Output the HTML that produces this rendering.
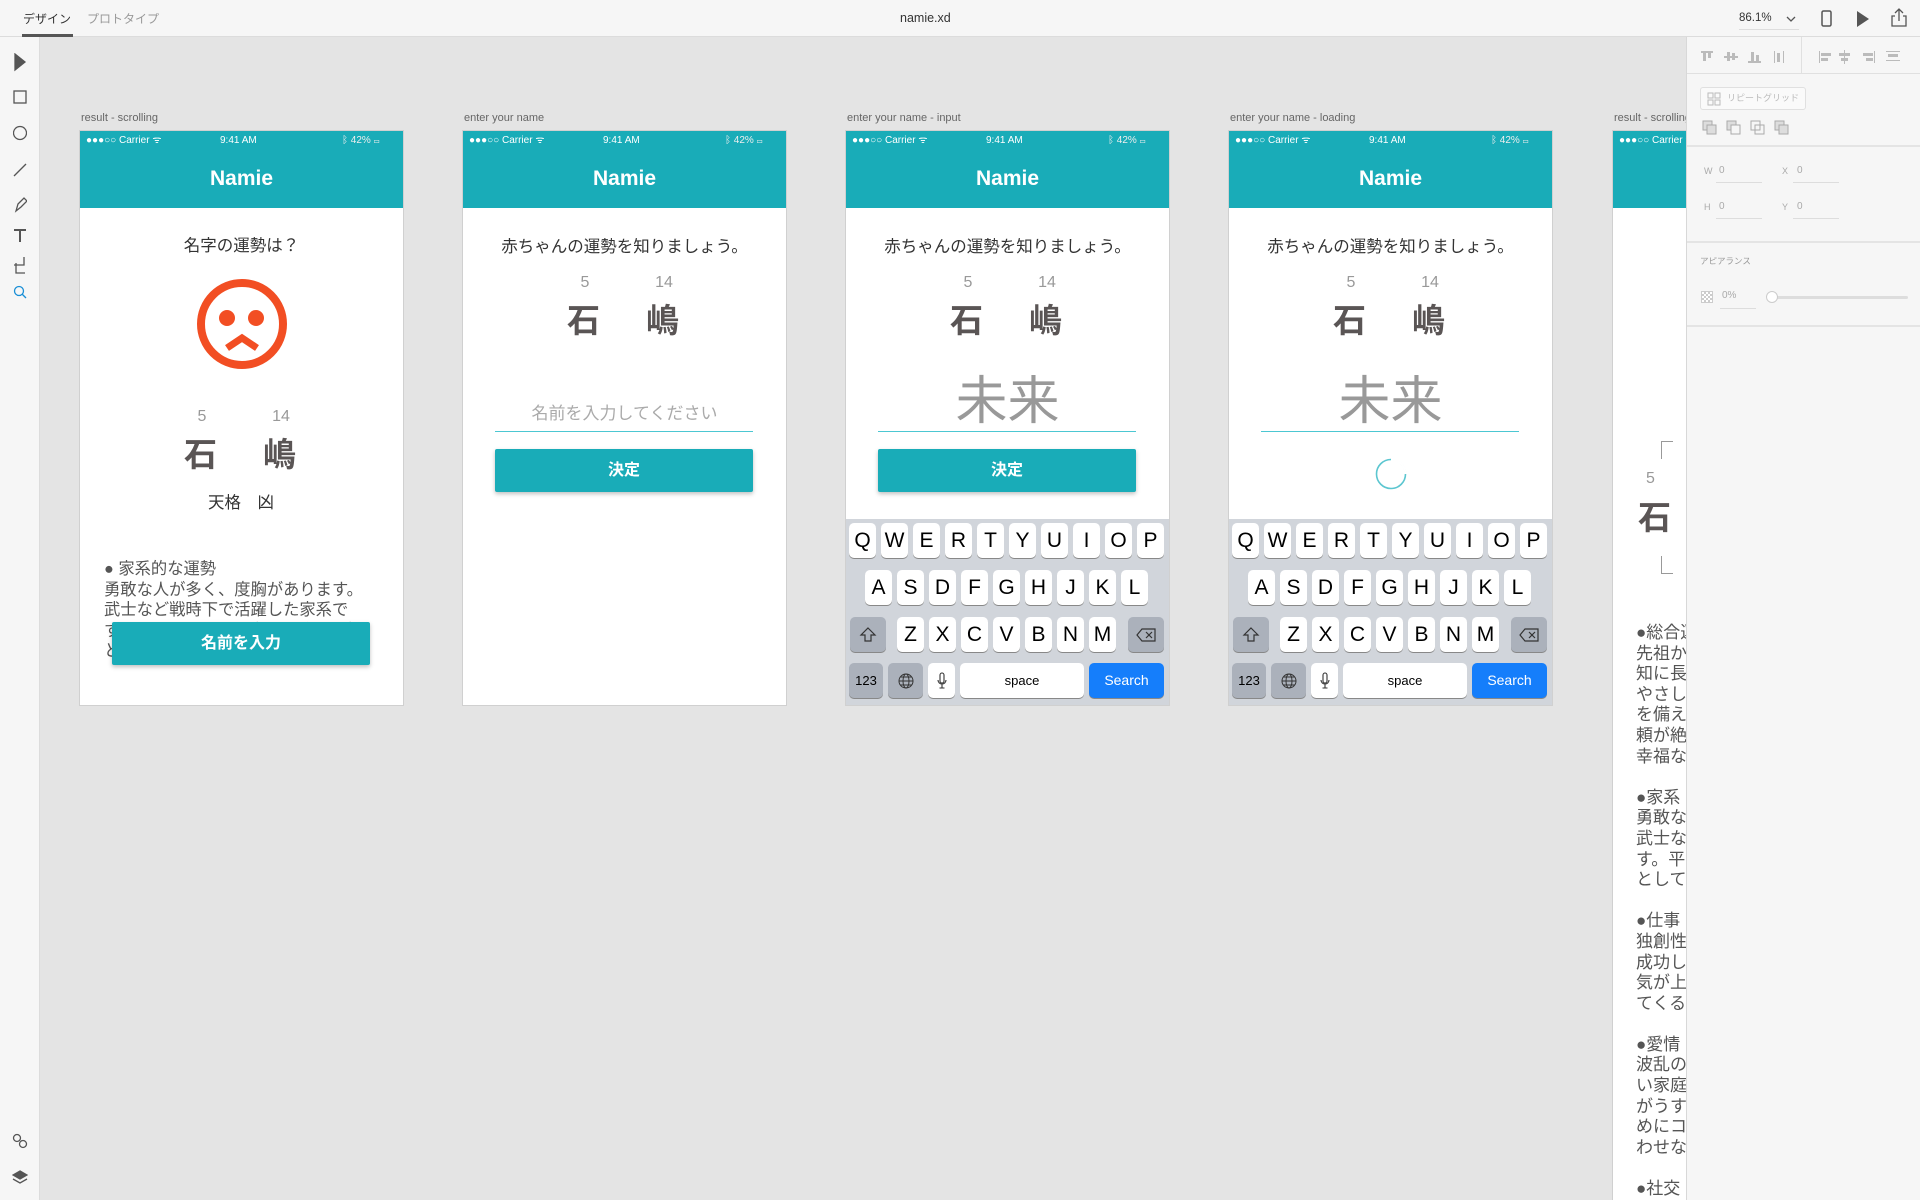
<!DOCTYPE html>
<html style="overflow:hidden;height:1200px"><head><meta charset="utf-8">
<style>
*{box-sizing:border-box;margin:0;padding:0}
body{width:1920px;height:1200px;overflow:hidden;background:#e4e4e4;font-family:"Liberation Sans","Noto Sans CJK JP",sans-serif;position:relative}
.abs{position:absolute}
#top{left:0;top:0;width:1920px;height:37px;background:#f6f6f6;border-bottom:1px solid #dcdcdc}
#left{left:0;top:37px;width:40px;height:1163px;background:#f6f6f6;border-right:1px solid #dcdcdc}
#right{left:1686px;top:37px;width:234px;height:1163px;background:#f6f6f6;border-left:1px solid #d8d8d8}
.lbl{font-size:11px;color:#666;top:112px}
.ph{top:131px;width:323px;height:574px;background:#fff;box-shadow:0 0 0 1px #d0d0d0;overflow:hidden}
.hd{left:0;top:0;width:323px;height:77px;background:#19acb8}
.sb{top:4px;font-size:10px;color:#fff;line-height:12px}
.nm{left:0;width:323px;top:34px;text-align:center;color:#fff;font-weight:bold;font-size:21px;line-height:28px}
.c{left:0;width:323px;text-align:center}
.num{font-size:16px;color:#999;line-height:18px}
.kj{font-size:33px;color:#5a5555;font-weight:bold;line-height:38px}
.btn{left:32px;width:258px;height:43px;background:#19acb8;color:#fff;font-weight:bold;font-size:16px;text-align:center;line-height:43px;box-shadow:0 2px 4px rgba(0,0,0,.25);border-radius:2px}
.kb{left:0;top:388px;width:323px;height:186px;background:#d1d5db}
.k{position:absolute;width:27px;height:35px;background:#fff;border-radius:5px;box-shadow:0 1px 0 #888;font-size:21px;color:#000;text-align:center;line-height:35px}
.f{background:#abb1bb}
.k svg{position:absolute;left:50%;top:50%;transform:translate(-50%,-50%)}
</style></head><body>
<div id="top" class="abs">
 <div class="abs" style="left:23px;top:10px;font-size:12px;color:#333">デザイン</div>
 <div class="abs" style="left:22px;top:34px;width:51px;height:3px;background:#555"></div>
 <div class="abs" style="left:87px;top:10px;font-size:12px;color:#999">プロトタイプ</div>
 <div class="abs" style="left:900px;top:11px;font-size:12.5px;color:#333">namie.xd</div>
 <div class="abs" style="left:1739px;top:12px;font-size:11.5px;color:#333">86.1%</div>
 <div class="abs" style="left:1739px;top:29px;width:60px;height:1px;background:#ddd"></div>
 <svg class="abs" style="left:1786px;top:15px" width="10" height="8"><path d="M1 2l4 4 4-4" stroke="#555" fill="none" stroke-width="1.3"/></svg>
 <svg class="abs" style="left:1820px;top:10px" width="14" height="18"><rect x="2" y="1" width="9" height="15" rx="1.5" stroke="#555" fill="none" stroke-width="1.5"/></svg>
 <svg class="abs" style="left:1855px;top:10px" width="16" height="18"><path d="M2 1l12 8-12 8z" fill="#555"/></svg>
 <svg class="abs" style="left:1890px;top:8px" width="18" height="20"><path d="M9 1v12M5 5l4-4 4 4M5 8H2v10h14V8h-3" stroke="#555" fill="none" stroke-width="1.3"/></svg>
</div>
<div id="left" class="abs">
 <svg class="abs" style="left:13px;top:16px" width="14" height="260" fill="none" stroke="#555" stroke-width="1.3">
  <path d="M2 1l10 8-10 8z" fill="#555"/>
  <rect x="1" y="38" width="12" height="12"/>
  <circle cx="7" cy="80" r="6.5"/>
  <path d="M1 123l12-12"/>
  <path d="M3 158l2-7 6-6 3 3-6 6z"/>
  <path d="M1 177h12M7 177v12" stroke-width="2"/>
  <path d="M3 210v10h9M1 212h10v-8"/>
  <circle cx="6" cy="238" r="4.5" stroke="#1a8fd6"/><path d="M9 241l4 4" stroke="#1a8fd6"/>
 </svg>
 <svg class="abs" style="left:12px;top:1096px" width="16" height="52" fill="none" stroke="#555" stroke-width="1.3">
  <circle cx="5" cy="5" r="3.5"/><circle cx="11" cy="11" r="3.5"/>
  <path d="M8 38l7 4-7 4-7-4z" fill="#555"/><path d="M1 46l7 4 7-4"/>
 </svg>
</div>

<div class="abs lbl" style="left:81px">result - scrolling</div>
<div class="abs lbl" style="left:464px">enter your name</div>
<div class="abs lbl" style="left:847px">enter your name - input</div>
<div class="abs lbl" style="left:1230px">enter your name - loading</div>
<div class="abs lbl" style="left:1614px">result - scrolling</div>

<!-- phone 1 -->
<div class="abs ph" style="left:80px">
 <div class="abs hd"></div>
 <div class="abs sb" style="left:6px">●●●○○ Carrier ᯤ</div>
 <div class="abs sb" style="left:140px">9:41 AM</div>
 <div class="abs sb" style="left:262px;color:#eee">ᛒ 42% ▭</div>
 <div class="abs nm">Namie</div>
 <div class="abs c" style="top:104px;font-size:16.5px;color:#333;line-height:22px">名字の運勢は？</div>
 <svg class="abs" style="left:112px;top:147px" width="100" height="100"><circle cx="50" cy="46" r="41" stroke="#f24e23" stroke-width="8" fill="none"/><circle cx="35" cy="40" r="8" fill="#f24e23"/><circle cx="64" cy="40" r="8" fill="#f24e23"/><path d="M35 70l15-10 15 10" stroke="#f24e23" stroke-width="7" fill="none"/></svg>
 <div class="abs num" style="left:112px;top:277px;width:20px;text-align:center">5</div>
 <div class="abs num" style="left:186px;top:277px;width:30px;text-align:center">14</div>
 <div class="abs kj" style="left:104px;top:305px">石</div>
 <div class="abs kj" style="left:183px;top:305px">嶋</div>
 <div class="abs" style="left:128px;top:361px;font-size:16.5px;color:#333;line-height:22px">天格　凶</div>
 <div class="abs" style="left:24px;top:428px;font-size:16.3px;color:#555;line-height:20.5px;width:300px;white-space:nowrap">● 家系的な運勢<br>勇敢な人が多く、度胸があります。<br>武士など戦時下で活躍した家系で<br>す。平和な時代には才能を発揮し指<br>として活躍するでしょう。</div>
 <div class="abs btn" style="top:491px">名前を入力</div>
</div>

<!-- phone 2 -->
<div class="abs ph" style="left:463px">
 <div class="abs hd"></div>
 <div class="abs sb" style="left:6px">●●●○○ Carrier ᯤ</div>
 <div class="abs sb" style="left:140px">9:41 AM</div>
 <div class="abs sb" style="left:262px;color:#eee">ᛒ 42% ▭</div>
 <div class="abs nm">Namie</div>
 <div class="abs c" style="top:105px;font-size:16.5px;color:#333;line-height:22px">赤ちゃんの運勢を知りましょう。</div>
 <div class="abs num" style="left:112px;top:143px;width:20px;text-align:center">5</div>
 <div class="abs num" style="left:186px;top:143px;width:30px;text-align:center">14</div>
 <div class="abs kj" style="left:104px;top:171px">石</div>
 <div class="abs kj" style="left:183px;top:171px">嶋</div>
 <div class="abs c" style="top:272px;font-size:17px;color:#aaa;line-height:22px">名前を入力してください</div>
 <div class="abs" style="left:32px;top:300px;width:258px;height:1px;background:#4cc7d2"></div>
 <div class="abs btn" style="top:318px">決定</div>
</div>

<!-- phone 3 -->
<div class="abs ph" style="left:846px">
 <div class="abs hd"></div>
 <div class="abs sb" style="left:6px">●●●○○ Carrier ᯤ</div>
 <div class="abs sb" style="left:140px">9:41 AM</div>
 <div class="abs sb" style="left:262px;color:#eee">ᛒ 42% ▭</div>
 <div class="abs nm">Namie</div>
 <div class="abs c" style="top:105px;font-size:16.5px;color:#333;line-height:22px">赤ちゃんの運勢を知りましょう。</div>
 <div class="abs num" style="left:112px;top:143px;width:20px;text-align:center">5</div>
 <div class="abs num" style="left:186px;top:143px;width:30px;text-align:center">14</div>
 <div class="abs kj" style="left:104px;top:171px">石</div>
 <div class="abs kj" style="left:183px;top:171px">嶋</div>
 <div class="abs c" style="top:240px;font-size:52px;color:#999;line-height:62px">未来</div>
 <div class="abs" style="left:32px;top:300px;width:258px;height:1px;background:#4cc7d2"></div>
 <div class="abs btn" style="top:318px">決定</div>
 <div class="abs kb">
  <div class="k" style="left:3px;top:4px">Q</div><div class="k" style="left:35px;top:4px">W</div><div class="k" style="left:67px;top:4px">E</div><div class="k" style="left:99px;top:4px">R</div><div class="k" style="left:131px;top:4px">T</div><div class="k" style="left:163px;top:4px">Y</div><div class="k" style="left:195px;top:4px">U</div><div class="k" style="left:227px;top:4px">I</div><div class="k" style="left:259px;top:4px">O</div><div class="k" style="left:291px;top:4px">P</div>
  <div class="k" style="left:19px;top:51px">A</div><div class="k" style="left:51px;top:51px">S</div><div class="k" style="left:83px;top:51px">D</div><div class="k" style="left:115px;top:51px">F</div><div class="k" style="left:147px;top:51px">G</div><div class="k" style="left:179px;top:51px">H</div><div class="k" style="left:211px;top:51px">J</div><div class="k" style="left:243px;top:51px">K</div><div class="k" style="left:275px;top:51px">L</div>
  <div class="k f" style="left:4px;top:98px;width:36px"><svg width="18" height="16"><path d="M9 1l7 7h-4v6H6V8H2z" fill="none" stroke="#333" stroke-width="1.2"/></svg></div>
  <div class="k" style="left:51px;top:98px">Z</div><div class="k" style="left:83px;top:98px">X</div><div class="k" style="left:115px;top:98px">C</div><div class="k" style="left:147px;top:98px">V</div><div class="k" style="left:179px;top:98px">B</div><div class="k" style="left:211px;top:98px">N</div><div class="k" style="left:243px;top:98px">M</div>
  <div class="k f" style="left:282px;top:98px;width:36px"><svg width="20" height="14"><path d="M6 1h13v12H6L1 7z" fill="none" stroke="#333" stroke-width="1.2"/><path d="M10 4l6 6M16 4l-6 6" stroke="#333" stroke-width="1.2"/></svg></div>
  <div class="k f" style="left:3px;top:144px;width:34px;font-size:13px">123</div>
  <div class="k f" style="left:42px;top:144px;width:35px"><svg width="16" height="16" fill="none" stroke="#333" stroke-width="1"><circle cx="8" cy="8" r="7"/><ellipse cx="8" cy="8" rx="3" ry="7"/><path d="M1 8h14M2.5 4h11M2.5 12h11"/></svg></div>
  <div class="k" style="left:82px;top:144px"><svg width="10" height="18" fill="none" stroke="#333" stroke-width="1.1"><rect x="3" y="1" width="4" height="10" rx="2"/><path d="M1 8a4 4 0 0 0 8 0M5 12v4M2.5 16h5"/></svg></div>
  <div class="k" style="left:114px;top:144px;width:124px;font-size:13px">space</div>
  <div class="k" style="left:243px;top:144px;width:75px;font-size:14px;background:#157efb;color:#fff">Search</div>
 </div>
</div>

<!-- phone 4 -->
<div class="abs ph" style="left:1229px">
 <div class="abs hd"></div>
 <div class="abs sb" style="left:6px">●●●○○ Carrier ᯤ</div>
 <div class="abs sb" style="left:140px">9:41 AM</div>
 <div class="abs sb" style="left:262px;color:#eee">ᛒ 42% ▭</div>
 <div class="abs nm">Namie</div>
 <div class="abs c" style="top:105px;font-size:16.5px;color:#333;line-height:22px">赤ちゃんの運勢を知りましょう。</div>
 <div class="abs num" style="left:112px;top:143px;width:20px;text-align:center">5</div>
 <div class="abs num" style="left:186px;top:143px;width:30px;text-align:center">14</div>
 <div class="abs kj" style="left:104px;top:171px">石</div>
 <div class="abs kj" style="left:183px;top:171px">嶋</div>
 <div class="abs c" style="top:240px;font-size:52px;color:#999;line-height:62px">未来</div>
 <div class="abs" style="left:32px;top:300px;width:258px;height:1px;background:#4cc7d2"></div>
 <svg class="abs" style="left:145px;top:326px" width="34" height="34"><circle cx="17" cy="17" r="14.5" stroke="#5cc6d0" stroke-width="1.6" fill="none"/><path d="M17 2.5a14.5 14.5 0 0 1 14.5 14.5" stroke="#fff" stroke-width="2.2" fill="none"/></svg>
 <div class="abs kb">
  <div class="k" style="left:3px;top:4px">Q</div><div class="k" style="left:35px;top:4px">W</div><div class="k" style="left:67px;top:4px">E</div><div class="k" style="left:99px;top:4px">R</div><div class="k" style="left:131px;top:4px">T</div><div class="k" style="left:163px;top:4px">Y</div><div class="k" style="left:195px;top:4px">U</div><div class="k" style="left:227px;top:4px">I</div><div class="k" style="left:259px;top:4px">O</div><div class="k" style="left:291px;top:4px">P</div>
  <div class="k" style="left:19px;top:51px">A</div><div class="k" style="left:51px;top:51px">S</div><div class="k" style="left:83px;top:51px">D</div><div class="k" style="left:115px;top:51px">F</div><div class="k" style="left:147px;top:51px">G</div><div class="k" style="left:179px;top:51px">H</div><div class="k" style="left:211px;top:51px">J</div><div class="k" style="left:243px;top:51px">K</div><div class="k" style="left:275px;top:51px">L</div>
  <div class="k f" style="left:4px;top:98px;width:36px"><svg width="18" height="16"><path d="M9 1l7 7h-4v6H6V8H2z" fill="none" stroke="#333" stroke-width="1.2"/></svg></div>
  <div class="k" style="left:51px;top:98px">Z</div><div class="k" style="left:83px;top:98px">X</div><div class="k" style="left:115px;top:98px">C</div><div class="k" style="left:147px;top:98px">V</div><div class="k" style="left:179px;top:98px">B</div><div class="k" style="left:211px;top:98px">N</div><div class="k" style="left:243px;top:98px">M</div>
  <div class="k f" style="left:282px;top:98px;width:36px"><svg width="20" height="14"><path d="M6 1h13v12H6L1 7z" fill="none" stroke="#333" stroke-width="1.2"/><path d="M10 4l6 6M16 4l-6 6" stroke="#333" stroke-width="1.2"/></svg></div>
  <div class="k f" style="left:3px;top:144px;width:34px;font-size:13px">123</div>
  <div class="k f" style="left:42px;top:144px;width:35px"><svg width="16" height="16" fill="none" stroke="#333" stroke-width="1"><circle cx="8" cy="8" r="7"/><ellipse cx="8" cy="8" rx="3" ry="7"/><path d="M1 8h14M2.5 4h11M2.5 12h11"/></svg></div>
  <div class="k" style="left:82px;top:144px"><svg width="10" height="18" fill="none" stroke="#333" stroke-width="1.1"><rect x="3" y="1" width="4" height="10" rx="2"/><path d="M1 8a4 4 0 0 0 8 0M5 12v4M2.5 16h5"/></svg></div>
  <div class="k" style="left:114px;top:144px;width:124px;font-size:13px">space</div>
  <div class="k" style="left:243px;top:144px;width:75px;font-size:14px;background:#157efb;color:#fff">Search</div>
 </div>
</div>

<!-- phone 5 -->
<div class="abs ph" style="left:1613px;height:1069px">
 <div class="abs hd"></div>
 <div class="abs sb" style="left:6px">●●●○○ Carrier ᯤ</div>
 <div class="abs" style="left:48px;top:310px;width:12px;height:18px;border-left:1px solid #999;border-top:1px solid #999"></div>
 <div class="abs" style="left:48px;top:425px;width:12px;height:18px;border-left:1px solid #999;border-bottom:1px solid #999"></div>
 <div class="abs num" style="left:33px;top:339px">5</div>
 <div class="abs kj" style="left:25px;top:368px">石</div>
 <div class="abs" style="left:23px;top:492px;font-size:17px;color:#555;line-height:20.6px;white-space:nowrap">●総合運<br>先祖か<br>知に長<br>やさし<br>を備え<br>頼が絶<br>幸福な<br><br>●家系<br>勇敢な<br>武士な<br>す。平<br>として<br><br>●仕事<br>独創性<br>成功し<br>気が上<br>てくる<br><br>●愛情<br>波乱の<br>い家庭<br>がうす<br>めにコ<br>わせな<br><br>●社交</div>
</div>

<div id="right" class="abs">
 <svg class="abs" style="left:10px;top:12px" width="220" height="16" fill="#bbb">
  <rect x="4" y="2" width="12" height="2"/><rect x="6" y="4" width="3" height="8"/><rect x="11" y="4" width="3" height="5"/>
  <rect x="27" y="7" width="14" height="2"/><rect x="30" y="3" width="3" height="9"/><rect x="35" y="4" width="3" height="7"/>
  <rect x="51" y="12" width="13" height="2"/><rect x="54" y="3" width="3" height="9"/><rect x="59" y="6" width="3" height="6"/>
  <rect x="77" y="2" width="1" height="12"/><rect x="80" y="4" width="3" height="9"/><rect x="86" y="2" width="1" height="12"/>
  <rect x="122" y="2" width="1" height="12"/><rect x="124" y="4" width="10" height="3"/><rect x="124" y="9" width="7" height="3"/>
  <rect x="147" y="1" width="1" height="14"/><rect x="142" y="4" width="11" height="3"/><rect x="144" y="9" width="7" height="3"/>
  <rect x="177" y="2" width="1" height="12"/><rect x="166" y="4" width="10" height="3"/><rect x="169" y="9" width="7" height="3"/>
  <rect x="189" y="2" width="14" height="1"/><rect x="191" y="5" width="10" height="3"/><rect x="189" y="11" width="14" height="1"/>
 </svg>
 <div class="abs" style="left:114px;top:0;width:1px;height:36px;background:#e0e0e0"></div>
 <div class="abs" style="left:0;top:36px;width:234px;height:1px;background:#e0e0e0"></div>
 <div class="abs" style="left:13px;top:50px;width:106px;height:23px;border:1px solid #e0e0e0;border-radius:3px;background:#fafafa;font-size:9px;color:#bbb;line-height:21px;padding-left:26px">リピートグリッド</div>
 <svg class="abs" style="left:20px;top:55px" width="14" height="14" fill="none" stroke="#bbb"><rect x="1" y="1" width="5" height="5"/><rect x="8" y="1" width="5" height="5"/><rect x="1" y="8" width="5" height="5"/><rect x="8" y="8" width="5" height="5"/></svg>
 <svg class="abs" style="left:15px;top:83px" width="95" height="16" fill="#ddd" stroke="#aaa">
  <rect x="1" y="1" width="9" height="9"/><rect x="5" y="5" width="9" height="9"/>
  <rect x="25" y="1" width="9" height="9"/><rect x="29" y="5" width="9" height="9" fill="#f6f6f6"/>
  <rect x="49" y="1" width="9" height="9" fill="none"/><rect x="53" y="5" width="9" height="9" fill="none"/>
  <rect x="73" y="1" width="9" height="9"/><rect x="77" y="5" width="9" height="9"/>
 </svg>
 <div class="abs" style="left:0;top:108px;width:234px;height:2px;background:#e4e4e4"></div>
 <div class="abs" style="left:17px;top:129px;font-size:9px;color:#aaa">W</div>
 <div class="abs" style="left:32px;top:128px;font-size:10px;color:#aaa">0</div>
 <div class="abs" style="left:29px;top:145px;width:46px;height:1px;background:#ddd"></div>
 <div class="abs" style="left:95px;top:129px;font-size:9px;color:#aaa">X</div>
 <div class="abs" style="left:110px;top:128px;font-size:10px;color:#aaa">0</div>
 <div class="abs" style="left:106px;top:145px;width:46px;height:1px;background:#ddd"></div>
 <div class="abs" style="left:17px;top:165px;font-size:9px;color:#aaa">H</div>
 <div class="abs" style="left:32px;top:164px;font-size:10px;color:#aaa">0</div>
 <div class="abs" style="left:29px;top:181px;width:46px;height:1px;background:#ddd"></div>
 <div class="abs" style="left:95px;top:165px;font-size:9px;color:#aaa">Y</div>
 <div class="abs" style="left:110px;top:164px;font-size:10px;color:#aaa">0</div>
 <div class="abs" style="left:106px;top:181px;width:46px;height:1px;background:#ddd"></div>
 <div class="abs" style="left:0;top:204px;width:234px;height:2px;background:#e4e4e4"></div>
 <div class="abs" style="left:13px;top:218px;font-size:8.5px;color:#999">アピアランス</div>
 <div class="abs" style="left:14px;top:254px;width:12px;height:12px;background:repeating-conic-gradient(#ccc 0 25%,#fff 0 50%) 0 0/4px 4px;border:1px solid #ccc"></div>
 <div class="abs" style="left:35px;top:253px;font-size:10px;color:#aaa">0%</div>
 <div class="abs" style="left:33px;top:271px;width:36px;height:1px;background:#ddd"></div>
 <div class="abs" style="left:85px;top:259px;width:136px;height:3px;background:#ddd;border-radius:2px"></div>
 <div class="abs" style="left:79px;top:254px;width:12px;height:12px;border:1px solid #ccc;border-radius:50%;background:#fff"></div>
 <div class="abs" style="left:0;top:288px;width:234px;height:2px;background:#e4e4e4"></div>
</div>
</body></html>
